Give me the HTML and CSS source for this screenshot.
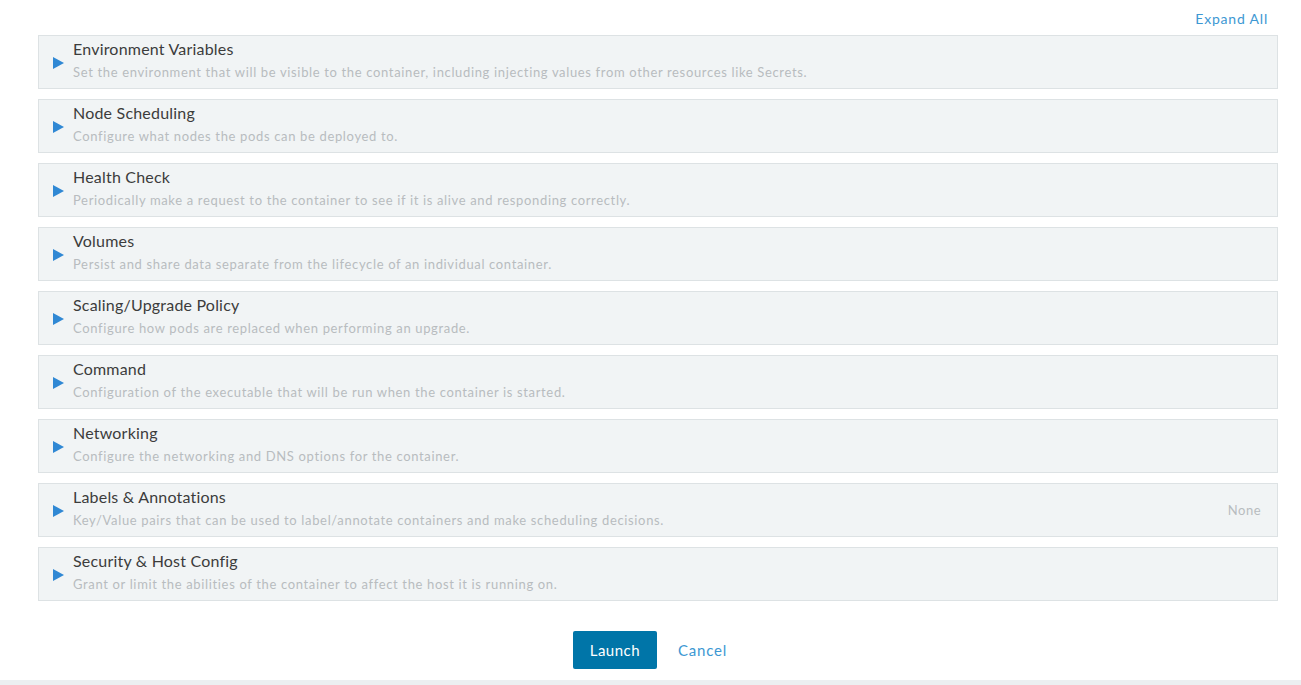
FILE: index.html
```html
<!DOCTYPE html>
<html>
<head>
<meta charset="utf-8">
<link rel="stylesheet" href="styles.css">
</head>
<body>
<div class="page">
  <div class="toolbar"><a class="link expand">Expand All</a></div>
  <div class="accordion">
    <div class="panel">
      <span class="arrow"></span>
      <div class="text"><div class="title">Environment Variables</div><div class="desc">Set the environment that will be visible to the container, including injecting values from other resources like Secrets.</div></div>
    </div>
    <div class="panel">
      <span class="arrow"></span>
      <div class="text"><div class="title">Node Scheduling</div><div class="desc">Configure what nodes the pods can be deployed to.</div></div>
    </div>
    <div class="panel">
      <span class="arrow"></span>
      <div class="text"><div class="title">Health Check</div><div class="desc">Periodically make a request to the container to see if it is alive and responding correctly.</div></div>
    </div>
    <div class="panel">
      <span class="arrow"></span>
      <div class="text"><div class="title">Volumes</div><div class="desc">Persist and share data separate from the lifecycle of an individual container.</div></div>
    </div>
    <div class="panel">
      <span class="arrow"></span>
      <div class="text"><div class="title">Scaling/Upgrade Policy</div><div class="desc">Configure how pods are replaced when performing an upgrade.</div></div>
    </div>
    <div class="panel">
      <span class="arrow"></span>
      <div class="text"><div class="title">Command</div><div class="desc">Configuration of the executable that will be run when the container is started.</div></div>
    </div>
    <div class="panel">
      <span class="arrow"></span>
      <div class="text"><div class="title">Networking</div><div class="desc">Configure the networking and DNS options for the container.</div></div>
    </div>
    <div class="panel">
      <span class="arrow"></span>
      <div class="text"><div class="title">Labels &amp; Annotations</div><div class="desc">Key/Value pairs that can be used to label/annotate containers and make scheduling decisions.</div></div>
      <span class="status">None</span>
    </div>
    <div class="panel">
      <span class="arrow"></span>
      <div class="text"><div class="title">Security &amp; Host Config</div><div class="desc">Grant or limit the abilities of the container to affect the host it is running on.</div></div>
    </div>
  </div>
  <div class="actions">
    <button class="btn-primary">Launch</button>
    <a class="link cancel">Cancel</a>
  </div>
</div>
<div class="footer-band"></div>
</body>
</html>
```

FILE: styles.css
```css
* { box-sizing: border-box; }
html, body { margin: 0; padding: 0; background: #fff; }
body {
  font-family: Lato, "Open Sans", "Liberation Sans", sans-serif;
  color: #333;
  width: 1301px;
  height: 685px;
  overflow: hidden;
  position: relative;
}
.page { padding: 0 23px 0 38px; }
.toolbar {
  display: flex;
  justify-content: flex-end;
  height: 35px;
  padding-top: 10px;
}
.link { color: #3d98d3; cursor: pointer; }
.expand { font-size: 14px; line-height: 18px; letter-spacing: 0.8px; margin-right: 10px; }
.accordion { display: flex; flex-direction: column; gap: 10px; }
.panel {
  display: flex;
  align-items: center;
  height: 54px;
  background: #f1f4f5;
  border: 1px solid #dde2e4;
  padding: 0 16px 0 14px;
}
.arrow {
  width: 0; height: 0;
  border-left: 11px solid #3088d4;
  border-top: 6px solid transparent;
  border-bottom: 6px solid transparent;
  margin-right: 9px;
  margin-top: 2px;
}
.text { flex: 1; display: flex; flex-direction: column; margin-top: -2px; }
.title { font-size: 16px; line-height: 19px; color: #3c3c3c; letter-spacing: 0.2px; margin-bottom: 2px; position: relative; top: -2px; }
.desc { font-size: 13px; line-height: 20px; color: #b8bcbf; letter-spacing: 0.65px; }
.status { font-size: 13px; color: #b8bcbf; letter-spacing: 0.5px; }
.actions {
  display: flex;
  justify-content: center;
  align-items: center;
  gap: 21px;
  margin-top: 30px;
  padding-right: 16px;
}
.btn-primary {
  background: #0075a8;
  color: #fff;
  border: none;
  border-radius: 2px;
  height: 38px;
  width: 84px;
  font-family: inherit;
  font-size: 15px;
  letter-spacing: 0.5px;
}
.cancel { font-size: 15px; letter-spacing: 0.8px; }
.footer-band {
  position: absolute;
  left: 0; right: 0; bottom: 0;
  height: 5px;
  background: #eceff1;
}
```
